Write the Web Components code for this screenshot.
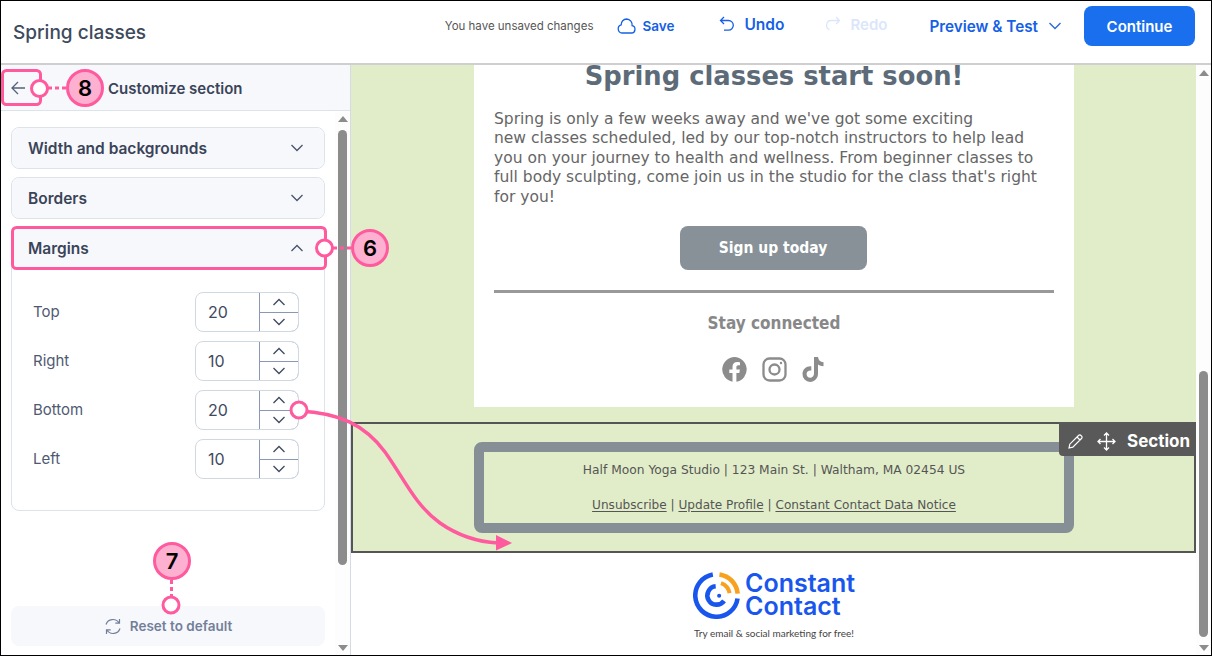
<!DOCTYPE html>
<html lang="en">
<head>
<meta charset="utf-8">
<title>Spring classes</title>
<style>
	html, body { margin: 0; padding: 0; background: #fff; }
	body { font-family: Inter, "Liberation Sans", sans-serif; }
</style>
</head>
<body>
<cc-editor>
	<cc-topbar slot="top" title="Spring classes"></cc-topbar>
	<cc-sidebar slot="side">
		<cc-accordion label="Width and backgrounds"></cc-accordion>
		<cc-accordion label="Borders"></cc-accordion>
		<cc-accordion label="Margins" open>
			<cc-stepper label="Top" value="20"></cc-stepper>
			<cc-stepper label="Right" value="10"></cc-stepper>
			<cc-stepper label="Bottom" value="20"></cc-stepper>
			<cc-stepper label="Left" value="10"></cc-stepper>
		</cc-accordion>
	</cc-sidebar>
	<cc-canvas slot="main"></cc-canvas>
	<cc-annotations slot="over">
		<cc-badge x="85" y="88">8</cc-badge>
		<cc-badge x="370" y="248">6</cc-badge>
		<cc-badge x="172" y="561">7</cc-badge>
	</cc-annotations>
</cc-editor>

<script>
(() => {
	const UI_FONT = 'Inter, "Liberation Sans", sans-serif';
	const MAIL_FONT = '"DejaVu Sans", Verdana, sans-serif';
	const MAIL_FONT_NARROW = '"DejaVu Sans Condensed", "DejaVu Sans", sans-serif';

	const CHEVRON_DOWN = '<svg width="14" height="8" viewBox="0 0 14 8" fill="none" stroke="currentColor" stroke-width="1.3"><path d="M1.5 1l5.5 5.5L12.500 1"/></svg>';
	const CHEVRON_UP = '<svg width="14" height="8" viewBox="0 0 14 8" fill="none" stroke="currentColor" stroke-width="1.3"><path d="M1.500 7L7 1.500 12.500 7"/></svg>';

	/* 要素ごとに shadow root を張るだけの基底クラス */
	class ShadowElement extends HTMLElement {
		constructor() {
			super();
			this.attachShadow({mode: 'open'});
		}

		connectedCallback() {
			this.shadowRoot.innerHTML = this.render();
		}
	}

	class CcEditor extends ShadowElement {
		render() {
			return `
				<style>
					:host {
						display: block;
						position: relative;
						box-sizing: border-box;
						width: 1212px;
						height: 656px;
						border: 1px solid #000;
						overflow: hidden;
					}
					.body {
						display: flex;
						height: 590px;
					}
				</style>
				<slot name="top"></slot>
				<div class="body">
					<slot name="side"></slot>
					<slot name="main"></slot>
				</div>
				<slot name="over"></slot>
			`;
		}
	}

	class CcTopbar extends ShadowElement {
		render() {
			return `
				<style>
					:host {
						display: flex;
						align-items: center;
						box-sizing: border-box;
						height: 64px;
						padding: 0 16px 12px 12px;
						border-bottom: 2px solid #cfcfcf;
						font-family: ${UI_FONT};
						color: #1560e6;
						font-size: 15.300px;
						font-weight: 600;
					}
					.title {
						flex: 1;
						margin-top: 12px;
						font-size: 19px;
						font-weight: 500;
						color: #3d4a5c;
					}
					.status {
						font-size: 11.500px;
						font-weight: 400;
						color: #555;
						margin-right: 24px;
					}
					.action {
						display: flex;
						align-items: center;
						gap: 7px;
					}
					.save { margin-right: 45px; font-size: 13.500px; gap: 6px; }
					.undo { margin: -4px 41px 0 0; gap: 9px; font-size: 15.500px; }
					.redo { margin: -4px 42px 0 0; gap: 9px; font-size: 15px; color: #dbe6fb; }
					.preview { gap: 10px; margin-right: 22px; }
					.preview svg { color: #2a66d8; }
					button {
						width: 111px;
						height: 40px;
						border: 0;
						border-radius: 8px;
						background: #1a6fee;
						color: #fff;
						font: 600 15px ${UI_FONT};
					}
				</style>
				<span class="title">${this.getAttribute('title')}</span>
				<span class="status">You have unsaved changes</span>
				<span class="action save">
					<svg width="19" height="16" viewBox="0 0 19 16" fill="none" stroke="currentColor" stroke-width="1.300"><path d="M5 15h9.500a3.700 3.700 0 0 0 .6-7.300A5.800 5.800 0 0 0 9.600 1a5.500 5.500 0 0 0-5.400 5.800A4.200 4.200 0 0 0 5 15z"/></svg>
					Save
				</span>
				<span class="action undo">
					<svg width="16" height="16" viewBox="0 0 16 16" fill="none" stroke="currentColor" stroke-width="1.300"><path d="M5 1L1.500 4.500 5 8M1.500 4.500h8a4.800 4.800 0 0 1 0 9.600H5"/></svg>
					Undo
				</span>
				<span class="action redo">
					<svg width="16" height="16" viewBox="0 0 16 16" fill="none" stroke="currentColor" stroke-width="1.300"><path d="M11 1l3.500 3.500L11 8M14.500 4.500h-8a4.800 4.800 0 0 0-2 9.200"/></svg>
					Redo
				</span>
				<span class="action preview">Preview &amp; Test ${CHEVRON_DOWN}</span>
				<button type="button">Continue</button>
			`;
		}
	}

	class CcScrollbar extends ShadowElement {
		render() {
			const top = this.getAttribute('thumb-top');
			const height = this.getAttribute('thumb-height');
			return `
				<style>
					:host {
						display: flex;
						flex-direction: column;
						align-items: center;
						box-sizing: border-box;
						flex: none;
						width: 15px;
						background: #fdfdfd;
					}
					.thumb {
						width: 9px;
						height: ${height}px;
						margin-top: ${top}px;
						border-radius: 5px;
						background: #8c8c8c;
					}
					.arrow {
						width: 0;
						height: 0;
						border: 5px solid transparent;
						border-top-width: 0;
						border-bottom: 6px solid #8c8c8c;
						margin-top: 5px;
					}
					.down {
						border-bottom-width: 0;
						border-top: 6px solid #8c8c8c;
						margin-top: auto;
						margin-bottom: 4px;
					}
				</style>
				<div class="arrow"></div>
				<div class="thumb"></div>
				<div class="arrow down"></div>
			`;
		}
	}

	class CcSidebar extends ShadowElement {
		render() {
			return `
				<style>
					:host {
						display: flex;
						flex-direction: column;
						flex: none;
						width: 350px;
						box-sizing: border-box;
						border-right: 1px solid #d5dae3;
						font-family: ${UI_FONT};
						color: #3a4458;
					}
					header {
						display: flex;
						align-items: center;
						flex: none;
						box-sizing: border-box;
						height: 46px;
						padding: 1px 0 0 10px;
						border-bottom: 1px solid #dde3ea;
						background: #f7f8fc;
						font-size: 15px;
						font-weight: 600;
					}
					header svg { color: #56617a; margin-right: 83px; }
					.scroller {
						display: flex;
						flex: 1;
						min-height: 0;
					}
					.content {
						display: flex;
						flex-direction: column;
						gap: 8px;
						flex: 1;
						box-sizing: border-box;
						padding: 16px 10px 9px 10px;
					}
					.reset {
						display: flex;
						align-items: center;
						justify-content: center;
						gap: 8px;
						height: 40px;
						margin-top: auto;
						border-radius: 8px;
						background: #f7f8fc;
						color: #737f9a;
						font-size: 13.500px;
						font-weight: 600;
					}
				</style>
				<header>
					<svg width="14" height="14" viewBox="0 0 14 14" fill="none" stroke="currentColor" stroke-width="1.300"><path d="M7 1L1 7l6 6M1 7h13"/></svg>
					Customize section
				</header>
				<div class="scroller">
					<div class="content">
						<slot></slot>
						<div class="reset">
							<svg width="18" height="17" viewBox="0 0 18 17" fill="none" stroke="currentColor" stroke-width="1.200"><path d="M2 6.500A7.200 7.200 0 0 1 15 5M16 10.500A7.200 7.200 0 0 1 3 12M15.500 1v4.200h-4.200M2.500 16v-4.200h4.200"/></svg>
							Reset to default
						</div>
					</div>
					<cc-scrollbar thumb-top="8" thumb-height="435"></cc-scrollbar>
				</div>
			`;
		}
	}

	class CcAccordion extends ShadowElement {
		render() {
			const open = this.hasAttribute('open');
			return `
				<style>
					:host {
						display: block;
						box-sizing: border-box;
						border: 1px solid #dde3ea;
						border-radius: 8px;
					}
					.head {
						display: flex;
						align-items: center;
						justify-content: space-between;
						box-sizing: border-box;
						height: 40px;
						padding: 0 20px 0 16px;
						border-radius: 8px;
						background: #f7f8fc;
						font-size: 15.500px;
						font-weight: 600;
					}
					.head svg { color: #4a556b; }
					.body {
						display: flex;
						flex-direction: column;
						gap: 9px;
						padding: 24px 25px 31px 21px;
					}
				</style>
				<div class="head">${this.getAttribute('label')} ${open ? CHEVRON_UP : CHEVRON_DOWN}</div>
				${open ? '<div class="body"><slot></slot></div>' : ''}
			`;
		}
	}

	class CcStepper extends ShadowElement {
		render() {
			return `
				<style>
					:host {
						display: flex;
						align-items: center;
						justify-content: space-between;
						height: 40px;
						font-size: 15px;
						font-weight: 400;
						color: #4f5a72;
					}
					.label { margin-top: -2px; }
					.field {
						display: flex;
						box-sizing: border-box;
						width: 104px;
						height: 40px;
						border: 1px solid #d0d9e0;
						border-radius: 8px;
						overflow: hidden;
					}
					.value {
						flex: 1;
						padding-left: 12px;
						line-height: 38px;
						font-size: 16px;
						color: #3f4a60;
					}
					.buttons {
						display: flex;
						flex-direction: column;
						width: 40px;
						margin: -1px;
						box-sizing: border-box;
						border: 1px solid #8a98b8;
						border-radius: 0 8px 8px 0;
					}
					.buttons span {
						display: flex;
						align-items: center;
						justify-content: center;
						flex: 1;
						color: #3f4a60;
					}
					.buttons span + span { border-top: 1px solid #8a98b8; }
				</style>
				<span class="label">${this.getAttribute('label')}</span>
				<div class="field">
					<span class="value">${this.getAttribute('value')}</span>
					<div class="buttons"><span>${CHEVRON_UP}</span><span>${CHEVRON_DOWN}</span></div>
				</div>
			`;
		}
	}

	class CcCanvas extends ShadowElement {
		render() {
			return `
				<style>
					:host {
						display: flex;
						flex: 1;
						min-width: 0;
						font-family: ${MAIL_FONT};
					}
					.page {
						flex: 1;
						min-width: 0;
					}
				</style>
				<div class="page">
					<cc-mail-card></cc-mail-card>
					<cc-mail-footer></cc-mail-footer>
					<cc-logo></cc-logo>
				</div>
				<cc-scrollbar thumb-top="295" thumb-height="266"></cc-scrollbar>
			`;
		}
	}

	class CcMailCard extends ShadowElement {
		render() {
			return `
				<style>
					:host {
						display: block;
						height: 357px;
						box-sizing: border-box;
						background: #e1edc9;
					}
					.card {
						display: flex;
						flex-direction: column;
						align-items: center;
						box-sizing: border-box;
						width: 600px;
						height: 342px;
						margin-left: 123px;
						padding: 0 20px;
						background: #fff;
					}
					h1 {
						margin: 0;
						height: 24px;
						line-height: 22px;
						font-size: 25.800px;
						font-weight: 700;
						color: #5d6b78;
					}
					p {
						align-self: stretch;
						margin: 21px 0 0;
						font-size: 15.500px;
						line-height: 19.400px;
						color: #666;
					}
					.cta {
						display: flex;
						align-items: center;
						justify-content: center;
						width: 187px;
						height: 44px;
						margin: 19px 2px 0 0;
						border-radius: 8px;
						background: #879197;
						color: #fff;
						font-family: ${MAIL_FONT_NARROW};
						font-size: 15.500px;
						font-weight: 700;
					}
					hr {
						align-self: stretch;
						height: 3px;
						margin: 20px 0 0;
						border: 0;
						background: #999;
					}
					.stay {
						margin-top: 20px;
						font-family: ${MAIL_FONT_NARROW};
						font-size: 17px;
						font-weight: 700;
						color: #888;
					}
					.social {
						display: flex;
						align-items: center;
						gap: 15px;
						margin: 24px 2px 0 0;
						color: #8c8c8c;
					}
				</style>
				<div class="card">
					<h1>Spring classes start soon!</h1>
					<p>Spring is only a few weeks away and we've got some exciting<br>new classes scheduled, led by our top-notch instructors to help lead you on your journey to health and wellness. From beginner classes to full body sculpting, come join us in the studio for the class that's right for you!</p>
					<div class="cta">Sign up today</div>
					<hr>
					<div class="stay">Stay connected</div>
					<div class="social">
						<svg width="25" height="25" viewBox="0 0 25 25"><path fill="currentColor" d="M12.500 0a12.500 12.500 0 0 0-2 24.800v-8.700H7.300v-3.600h3.200V9.800c0-3.100 1.900-4.900 4.700-4.900 1.400 0 2.800.3 2.800.3v3h-1.600c-1.500 0-2 1-2 1.900v2.400h3.500l-.6 3.600h-2.900v8.700A12.500 12.500 0 0 0 12.500 0z"/></svg>
						<svg width="25" height="25" viewBox="0 0 25 25" fill="none" stroke="currentColor" stroke-width="2.300"><rect x="1.500" y="1.500" width="22" height="22" rx="6"/><circle cx="12.500" cy="12.500" r="5"/><circle cx="19" cy="6" r="1.200" fill="currentColor" stroke="none"/></svg>
						<svg width="23" height="25" viewBox="0 0 23 25"><path fill="currentColor" d="M12 0h4c.3 3 2.200 5 5.500 5.300v4c-2 0-3.900-.6-5.500-1.700v9.200c0 4.500-3.500 8.200-8 8.200a7.800 7.800 0 0 1-7.500-8c0-4.500 3.800-8 8.800-7.600v4.200c-2.700-.5-4.700 1.100-4.700 3.400 0 2 1.500 3.800 3.500 3.800 2.200 0 3.900-1.500 3.900-4.200z"/></svg>
					</div>
				</div>
			`;
		}
	}

	class CcMailFooter extends ShadowElement {
		render() {
			return `
				<style>
					:host {
						display: block;
						position: relative;
						box-sizing: border-box;
						height: 131px;
						padding-top: 18px;
						border: 2px solid #555;
						background: #e1edc9;
					}
					.box {
						box-sizing: border-box;
						width: 600px;
						height: 91px;
						margin-left: 121px;
						padding-top: 9px;
						border: 10px solid #868f96;
						border-radius: 8px;
						font-size: 12.250px;
						line-height: 18px;
						text-align: center;
						color: #555;
					}
					.box div + div { margin-top: 17px; font-size: 12.100px; }
					u { text-underline-offset: 2px; }
					.tools {
						display: flex;
						align-items: center;
						position: absolute;
						top: -2px;
						right: -2px;
						box-sizing: border-box;
						width: 137px;
						height: 34px;
						padding: 4px 0 0 9px;
						border-radius: 0 0 0 4px;
						background: #595959;
						color: #fff;
						font-size: 17px;
						font-weight: 700;
						font-family: ${UI_FONT};
					}
					.tools svg:first-child { margin-right: 14px; }
					.tools svg:nth-child(2) { margin-right: 11px; }
				</style>
				<div class="box">
					<div>Half Moon Yoga Studio | 123 Main St. | Waltham, MA 02454 US</div>
					<div><u>Unsubscribe</u> | <u>Update Profile</u> | <u>Constant Contact Data Notice</u></div>
				</div>
				<div class="tools">
					<svg width="15" height="15" viewBox="0 0 15 15" fill="none" stroke="currentColor" stroke-width="1.200"><path d="M1 14l.8-3.800L10.500 1.500a1.700 1.700 0 0 1 2.500 0l.5.500a1.700 1.700 0 0 1 0 2.500L4.800 13.200zM9 3l3 3"/></svg>
					<svg width="19" height="19" viewBox="0 0 19 19" fill="none" stroke="currentColor" stroke-width="1.300"><path d="M9.500 1v17M1 9.500h17M7 3.500L9.500 1 12 3.500M7 15.500L9.500 18l2.500-2.500M3.500 7L1 9.500 3.500 12M15.500 7L18 9.500 15.500 12"/></svg>
					Section
				</div>
			`;
		}
	}

	class CcLogo extends ShadowElement {
		render() {
			return `
				<style>
					:host {
						display: flex;
						flex-direction: column;
						box-sizing: border-box;
						padding: 18px 0 0 342px;
						font-family: ${UI_FONT};
					}
					.mark {
						display: flex;
						align-items: center;
						gap: 5px;
					}
					.name {
						font-size: 25px;
						line-height: 23px;
						font-weight: 600;
						color: #1856ed;
					}
					.tag {
						margin: 8px 0 0 1px;
						font-family: Lato, sans-serif;
						font-size: 10px;
						color: #444;
					}
				</style>
				<div class="mark">
					<svg width="47" height="48" viewBox="0 0 46 47" fill="none" stroke-width="4.500">
						<path stroke="#1856ed" d="M19.400 3.500A20.800 20.800 0 1 0 43.600 26.900"/>
						<path stroke="#f7a11f" d="M25.900 3.400A20.800 20.800 0 0 1 43.700 22.200"/>
						<path stroke="#1856ed" d="M22.200 15A9 9 0 1 0 30.400 29.200"/>
						<path stroke="#f7a11f" stroke-width="4" d="M27.400 11.800A13 13 0 0 1 35.800 21.700"/>
						<circle cx="25.600" cy="24.300" r="2" fill="#1856ed"/>
					</svg>
					<div class="name">Constant<br>Contact</div>
				</div>
				<div class="tag">Try email &amp; social marketing for free!</div>
			`;
		}
	}

	class CcBadge extends ShadowElement {
		render() {
			const x = Number(this.getAttribute('x')) - 19;
			const y = Number(this.getAttribute('y')) - 19;
			return `
				<style>
					:host {
						display: flex;
						align-items: center;
						justify-content: center;
						position: absolute;
						left: ${x}px;
						top: ${y}px;
						box-sizing: border-box;
						width: 38px;
						height: 38px;
						border: 3px solid #ff5a9e;
						border-radius: 50%;
						background: #fdb0d0;
						color: #000;
						font: 600 22px ${UI_FONT};
					}
				</style>
				<slot></slot>
			`;
		}
	}

	class CcAnnotations extends ShadowElement {
		render() {
			return `
				<style>
					:host {
						display: block;
						position: absolute;
						inset: -1px;
						pointer-events: none;
					}
					svg { position: absolute; left: 0; top: 0; }
				</style>
				<svg width="1212" height="656" viewBox="0 0 1212 656" fill="none" stroke="#ff5a9e" stroke-width="3">
					<rect x="2.500" y="70.500" width="38" height="34" rx="4"/>
					<rect x="12.500" y="227.500" width="313" height="41" rx="4"/>
					<path stroke-dasharray="4 3" d="M48 88h18M333 248h18M171.500 580v16"/>
					<path stroke-width="3.500" d="M299 411C340 413 365 425 385 452C405 480 415 505 440 523C460 537 480 542 498 543"/>
					<path fill="#ff5a9e" stroke="none" d="M496 535l16 8-16 7.500z"/>
					<g fill="#fff">
						<circle cx="39.500" cy="88.500" r="8"/>
						<circle cx="324.500" cy="248" r="8"/>
						<circle cx="171" cy="605" r="8"/>
						<circle cx="299" cy="410" r="8"/>
					</g>
				</svg>
				<slot></slot>
			`;
		}
	}

	customElements.define('cc-editor', CcEditor);
	customElements.define('cc-topbar', CcTopbar);
	customElements.define('cc-scrollbar', CcScrollbar);
	customElements.define('cc-sidebar', CcSidebar);
	customElements.define('cc-accordion', CcAccordion);
	customElements.define('cc-stepper', CcStepper);
	customElements.define('cc-canvas', CcCanvas);
	customElements.define('cc-mail-card', CcMailCard);
	customElements.define('cc-mail-footer', CcMailFooter);
	customElements.define('cc-logo', CcLogo);
	customElements.define('cc-badge', CcBadge);
	customElements.define('cc-annotations', CcAnnotations);
})();
</script>
</body>
</html>
